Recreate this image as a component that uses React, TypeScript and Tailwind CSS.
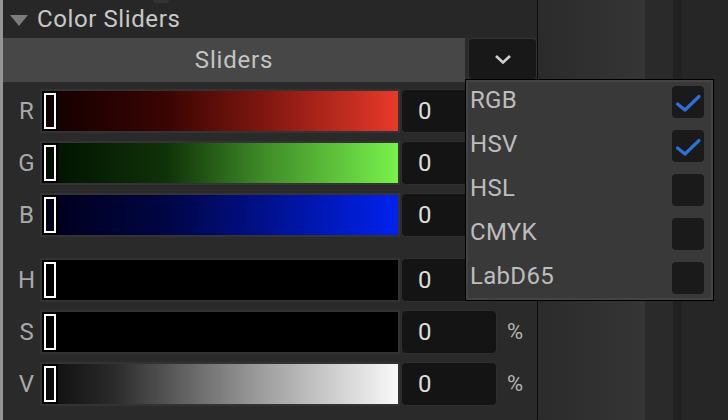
import React from "react";

const font = { fontFamily: "Roboto, 'Liberation Sans', sans-serif" };

type Row = { label: string; bg: string; pct?: boolean; thumbBg: string };

const rgbRows: Row[] = [
  { label: "R", bg: "bg-[linear-gradient(to_right,#110000_0%,#3a0503_35%,#7e160f_62%,#e8392a_100%)]", thumbBg: "bg-[#110000]" },
  { label: "G", bg: "bg-[linear-gradient(to_right,#001000_0%,#0f3208_35%,#3f8a28_62%,#78f24b_100%)]", thumbBg: "bg-[#001000]" },
  { label: "B", bg: "bg-[linear-gradient(to_right,#00001a_0%,#000644_35%,#00108a_62%,#0022ef_100%)]", thumbBg: "bg-[#00001a]" },
];

const hsvRows: Row[] = [
  { label: "H", bg: "bg-black", thumbBg: "bg-black" },
  { label: "S", bg: "bg-black", pct: true, thumbBg: "bg-black" },
  { label: "V", bg: "bg-[linear-gradient(to_right,#0c0c0c_0%,#2a2a2a_20%,#999999_60%,#fafafa_100%)]", pct: true, thumbBg: "bg-[#0c0c0c]" },
];

function SliderRow({ row }: { row: Row }) {
  return (
    <div className="flex h-[52px] items-center">
      <div className="w-[39px] pl-[8px] text-center text-[24px] leading-none text-[#a9a9a9]">{row.label}</div>
      <div className={`relative h-[40px] w-[356px] ${row.bg} shadow-[0_0_0_2px_#333333]`}>
        <div className="absolute left-0 top-0 flex h-[40px] w-[16px] items-stretch bg-black p-[2px]">
          <div className={`flex-1 border-2 border-white ${row.thumbBg}`} />
        </div>
      </div>
      <div className="ml-[3px] flex h-[44px] w-[96px] items-center rounded-[5px] border border-[#2f2f2f] bg-[#141414] pl-[16px] text-[24px] leading-none text-[#dedede]">
        0
      </div>
      {row.pct && <div className="ml-[10px] text-[22px] leading-none text-[#b4b4b4]">%</div>}
    </div>
  );
}

function Check() {
  return (
    <svg width="32" height="32" viewBox="0 0 32 32">
      <polyline points="5.5,18 13,24 27,10.5" fill="none" stroke="#2f70d8" strokeWidth="3.2" strokeLinejoin="round" strokeLinecap="round" />
    </svg>
  );
}

const menuItems = [
  { name: "RGB", checked: true },
  { name: "HSV", checked: true },
  { name: "HSL", checked: false },
  { name: "CMYK", checked: false },
  { name: "LabD65", checked: false },
];

export default function App() {
  return (
    <div className="relative flex h-[420px] w-[728px] overflow-hidden bg-[#262626]" style={font}>
      <div className="w-[3px] bg-[#959595]" />
      <div className="flex w-[535px] flex-col border-r border-[#0c0c0c] bg-[#2a2a2a]">
        <div className="relative flex h-[38px] items-center bg-[#272727]">
          <div className="absolute left-[150px] top-0 h-[3px] w-[16px] rounded-b-[3px] bg-[#333333]" />
          <svg width="18" height="11" viewBox="0 0 18 11" className="ml-[7px] mt-[2px]">
            <polygon points="0,0 18,0 9,11" fill="#7c7c7c" />
          </svg>
          <span className="ml-[9px] text-[24px] leading-none tracking-[0.6px] text-[#c9c9c9]">Color Sliders</span>
        </div>
        <div className="flex h-[44px]">
          <div className="flex w-[462px] items-center justify-center bg-[#474747] text-[24px] leading-none tracking-[0.8px] text-[#c4c4c4]">
            Sliders
          </div>
          <div className="ml-[3px] flex h-[42px] w-[69px] items-center justify-center rounded-[4px] border border-[#333333] bg-[#181818]">
            <svg width="18" height="11" viewBox="0 0 18 11">
              <polyline points="2,2 9,8.5 16,2" fill="none" stroke="#cfcfcf" strokeWidth="2.6" />
            </svg>
          </div>
        </div>
        <div className="mt-[3px] flex flex-col">
          {rgbRows.map((r) => (
            <SliderRow key={r.label} row={r} />
          ))}
        </div>
        <div className="mt-[13px] flex flex-col">
          {hsvRows.map((r) => (
            <SliderRow key={r.label} row={r} />
          ))}
        </div>
      </div>
      <div className="flex flex-1">
        <div className="w-[107px] bg-[linear-gradient(to_right,#2b2b2b,#353535)]" />
        <div className="w-[28px] bg-[#2a2a2a]" />
        <div className="w-[9px] bg-[#212121]" />
        <div className="flex-1 bg-[#262626]" />
      </div>

      <div className="absolute left-[465px] top-[79px] w-[249px] border border-black bg-[#393939] shadow-[inset_0_0_0_2px_#444444]">
        {menuItems.map((m) => (
          <div key={m.name} className="flex h-[44px] items-center justify-between pl-[4px] pr-[9px]">
            <span className="-mt-[5px] text-[24px] leading-none tracking-[0.3px] text-[#bdbdbd]">{m.name}</span>
            <div className="h-[32px] w-[32px] rounded-[4px] bg-[#1a1a1a]">{m.checked && <Check />}</div>
          </div>
        ))}
      </div>
    </div>
  );
}
